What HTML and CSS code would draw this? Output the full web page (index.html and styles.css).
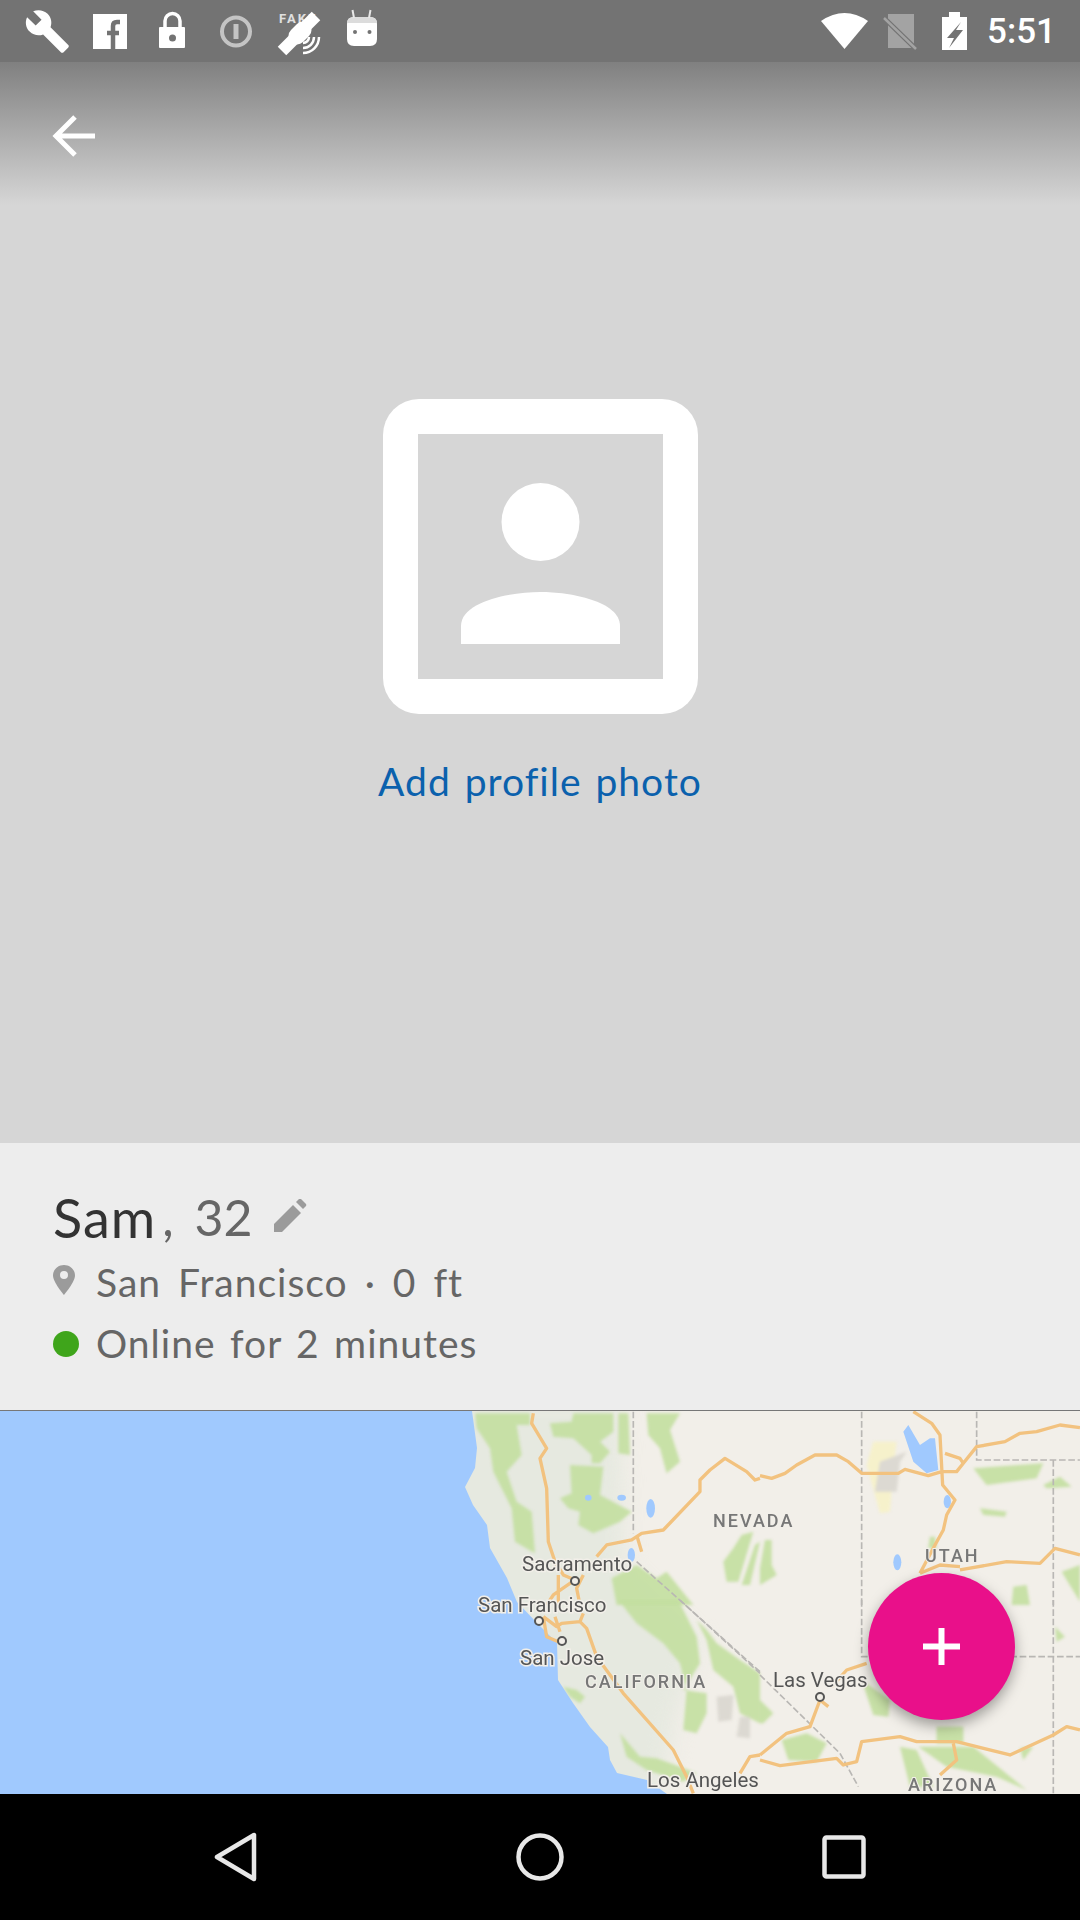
FILE: index.html
```html
<!DOCTYPE html>
<html lang="en">
<head>
    <meta charset="UTF-8">
    <meta name="viewport" content="width=device-width, initial-scale=1.0">
    <link rel="stylesheet" href="styles.css">
    <title>Profile</title>
</head>
<body>
    <div class="screen">
        <div class="statusBar">
            <svg class="statusIcons" width="400" height="62" viewBox="0 0 400 62">
                <!-- wrench -->
                <path class="white" transform="translate(24 8) scale(1.95)" d="M22.7 19l-9.1-9.1c.9-2.3.4-5-1.5-6.9-2-2-5-2.4-7.400-1.300L9 6 6 9 1.600 4.700C.4 7.100.9 10.100 2.900 12.100c1.900 1.900 4.600 2.400 6.900 1.500l9.100 9.100c.4.4 1 .4 1.400 0l2.300-2.300c.5-.4.5-1.100.1-1.400z"/>
                <!-- facebook -->
                <rect class="white" x="93" y="14" width="34" height="35"/>
                <path class="cut" d="M120 22h-3q-4 0-4 4v23M107 33h12"/>
                <!-- lock -->
                <path d="M165 28v-7a7.500 7.500 0 0 1 15 0v7" fill="none" stroke="#fff" stroke-width="3.500"/>
                <rect class="white" x="159" y="27" width="26" height="21" rx="1"/>
                <circle cx="172.500" cy="38" r="3.500" fill="#737373"/>
                <!-- info -->
                <circle cx="236" cy="31.500" r="14" fill="none" stroke="#c4c4c4" stroke-width="4"/>
                <path d="M236 24v15" stroke="#c4c4c4" stroke-width="5"/>
                <!-- fake gps -->
                <text class="fakeLabel" x="279" y="23">FAKE</text>
                <path d="M282 51l13-13" stroke="#fff" stroke-width="12"/>
                <path d="M297 36l6-6" stroke="#fff" stroke-width="17" stroke-linecap="round"/>
                <path d="M306 26l10-10" stroke="#fff" stroke-width="12"/>
                <path d="M303 43a6 6 0 0 0 6-6M303 48a11 11 0 0 0 11-11M303 53a16 16 0 0 0 16-16" fill="none" stroke="#fff" stroke-width="2.500"/>
                <!-- android -->
                <path class="white" d="M347 24q0-7 7-7h16q7 0 7 7v15q0 7-7 7h-16q-7 0-7-7z"/>
                <path d="M347 23q0-6 7-6h16q7 0 7 6z" fill="#dcdcdc"/>
                <path d="M354 18l-1.500-8M369 18l1.500-8" stroke="#e8e8e8" stroke-width="2"/>
                <circle cx="355" cy="32" r="2" fill="#737373"/>
                <circle cx="369.500" cy="32" r="2" fill="#737373"/>
            </svg>
            <div class="statusRight">
                <svg width="150" height="62" viewBox="820 0 150 62">
                    <path class="white" d="M822 21Q845.500 5 869 21L845.500 49z"/>
                    <path d="M889 14h26v34h-26z" fill="#a3a3a3"/>
                    <path d="M885 18l32 31" stroke="#737373" stroke-width="5"/>
                    <path d="M885 18l32 31" stroke="#a3a3a3" stroke-width="2.500"/>
                    <path class="white" d="M950 12h11v5h7v33h-25v-33h7z"/>
                    <path d="M962 22l-14 16h7l-5 10 14-18h-7z" fill="#737373"/>
                </svg>
                <span class="clock">5:51</span>
            </div>
        </div>

        <div class="photoArea">
            <svg class="backArrow" width="50" height="50" viewBox="0 0 50 50">
                <path d="M46 25H7M26 6L7 25l19 19" fill="none" stroke="#fff" stroke-width="5"/>
            </svg>
            <div class="photoFrame">
                <svg width="245" height="245" viewBox="418 434 245 245">
                    <circle cx="540.500" cy="522" r="39" fill="#fff"/>
                    <path d="M461 644v-18c0-25 50-34 79.500-34s79.500 9 79.500 34v18z" fill="#fff"/>
                </svg>
            </div>
            <div class="addPhoto">Add profile photo</div>
        </div>

        <div class="info">
            <div class="nameRow">
                <span class="name">Sam</span>
                <span class="comma">,</span>
                <span class="age">32</span>
                <svg class="pencil" width="34" height="34" viewBox="0 0 34 34">
                    <path d="M1 25L20 6l8 8L9 33H1z" fill="#9b9b9b"/>
                    <path d="M23 3l3-3q1-.5 2 0l5 5q.5 1 0 2l-3 3z" fill="#9b9b9b"/>
                </svg>
            </div>
            <div class="infoRow cityRow">
                <svg class="infoIcon" width="22" height="30" viewBox="0 0 22 30">
                    <path fill-rule="evenodd" d="M11 0C5 0 0 4.500 0 10.500 0 17 11 30 11 30s11-13 11-19.500C22 4.500 17 0 11 0zm0 14a4 4 0 1 1 0-8 4 4 0 0 1 0 8z" fill="#9b9b9b"/>
                </svg>
                <span>San Francisco · 0 ft</span>
            </div>
            <div class="infoRow">
                <span class="onlineDot"></span>
                <span>Online for 2 minutes</span>
            </div>
        </div>

        <div class="mapArea">
            <svg class="map" width="1080" height="383" viewBox="0 1411 1080 383">
                <rect class="land" x="0" y="1411" width="1080" height="383"/>
                <path class="valley" d="M400 1400H620L625 1565 700 1640 675 1720 660 1800H400z"/>

                <g class="terrain">
                    <!-- north west part -->
                    <g transform="translate(440 1405) scale(.3333)">
                        <path class="green" d="M105 25H270V60H230L245 150 200 200 230 290 275 320 285 445 225 410 215 310 160 200 150 130 110 70z"/>
                        <path class="green" d="M330 55L395 50 400 25H520V80L480 110 510 140 480 175H455V150L400 100 340 95z"/>
                        <path class="green" d="M390 180L490 185 480 270 575 320 540 350 460 385 415 360 420 320 385 310 360 280 395 265z"/>
                        <path class="green" d="M535 25H565L570 150 535 145z"/>
                        <path class="green" d="M620 25H720L690 75 720 170 680 205 660 130 625 90z"/>
                        <path class="green" d="M515 520L590 480 650 520 680 500 760 600H530z"/>
                        <path class="green" d="M905 390L940 380 895 530 860 530 850 470 880 430z"/>
                        <path class="green" d="M960 410L930 540 905 540 945 420z"/>
                    </g>
                    <!-- south west part -->
                    <g transform="translate(440 1600) scale(.3333)">
                        <path class="green" d="M535 0H715L770 110 780 190 730 270 800 280V340L770 400 730 390 740 270 720 190 670 130 590 70z"/>
                        <path class="green" d="M770 60L800 90 830 130 900 180 960 220V370L900 340 880 260 820 210 800 120z"/>
                        <path class="green" d="M370 260L410 270 435 290 420 310 390 290z"/>
                        <path class="green" d="M540 400L600 470 650 475 720 500 770 520 730 545 620 510 560 470z"/>
                        <path class="grey" d="M830 290L880 285 875 360 835 365z"/>
                        <path class="grey" d="M900 350H930V415L890 410z"/>
                    </g>
                    <!-- north east part -->
                    <g transform="translate(760 1405) scale(.3333)">
                        <path class="yellow" d="M340 110H410L400 190 390 320 360 325 320 180z"/>
                        <path class="grey" d="M360 170L440 140 420 170 410 260H345z"/>
                        <path class="green" d="M640 190L850 175 830 220 680 240z"/>
                        <path class="green" d="M660 310L740 320 735 335 670 330z"/>
                        <path class="green" d="M850 240L900 215 935 245 860 250z"/>
                        <path class="green" d="M760 545L800 540 810 600H755z"/>
                        <path class="green" d="M905 500L960 480V590z"/>
                        <path class="green" d="M15 405H35V480L50 510 0 540V490z"/>
                        <path class="green" d="M510 395L525 395 530 430 505 430z"/>
                    </g>
                    <!-- south east part -->
                    <g transform="translate(760 1600) scale(.3333)">
                        <path class="green" d="M420 440L470 450 520 560H450z"/>
                        <path class="green" d="M475 440H640L800 570 710 530 560 500z"/>
                        <path class="green" d="M530 380H610V430H530z"/>
                        <path class="green" d="M65 420L140 400 200 430 170 485 85 480z"/>
                        <path class="green" d="M0 300L40 340 10 370H0z"/>
                        <path class="green" d="M305 240L390 300 385 350 340 345z"/>
                        <path class="green" d="M780 445L820 440 790 480z"/>
                        <path class="green" d="M885 80L915 110 890 125z"/>
                    </g>
                </g>

                <path class="sea" d="M0 1411H472L477 1448 475 1468 465 1487 473 1505 487 1525 490 1548 507 1578 517 1602 537 1623 557 1643 558 1680 573 1703 590 1727 608 1747 610 1760 617 1773 647 1780 667 1794H0z"/>

                <!-- lakes, borders and roads -->
                <g transform="translate(440 1405) scale(.3333)">
                    <ellipse class="lake" cx="632" cy="310" rx="13" ry="28"/>
                    <ellipse class="lake" cx="545" cy="278" rx="13" ry="9"/>
                    <ellipse class="lake" cx="445" cy="278" rx="10" ry="9"/>
                    <ellipse class="lake" cx="574" cy="450" rx="11" ry="21"/>
                    <path class="border" d="M580 20V385M590 470L960 800"/>
                    <path class="road" d="M280 25L275 55 320 130 300 160 320 250 325 410 345 470 370 510 405 525M470 455L500 420 575 405 605 385 670 375 780 260V225L810 195 855 160 920 200 945 225 960 220M405 525L340 570 320 600M355 510V600M430 510L410 550 420 600M590 390L605 440"/>
                </g>
                <g transform="translate(440 1600) scale(.3333)">
                    <path class="road" d="M310 50L350 80 365 70 420 65 440 85 470 170 550 280 700 450 740 530 760 580M310 50L320 110 355 125M345 50L360 95M430 40L420 65M900 520L930 470 960 465"/>
                    <path class="border" d="M720 0L960 220"/>
                </g>
                <g transform="translate(760 1405) scale(.3333)">
                    <path class="lake" d="M430 80L445 60 480 120 510 100 525 100 535 195 500 205 460 170z"/>
                    <ellipse class="lake" cx="562" cy="290" rx="11" ry="20"/>
                    <ellipse class="lake" cx="412" cy="472" rx="12" ry="24"/>
                    <path class="border" d="M305 20V600M650 20V165H960M880 165V600"/>
                    <path class="road" d="M0 212L35 220 75 205 110 180 165 150H230L265 170 305 205H415L435 193 505 212 545 200H590L610 175 600 160 555 145M460 20L515 55 540 90 548 240 585 285 560 330 550 375 525 420 480 505M610 175L650 125 735 110 780 85 830 80 900 60 960 68M600 495L740 470 840 475 885 430 960 450M480 505L540 480 600 485"/>
                </g>
                <g transform="translate(760 1600) scale(.3333)">
                    <path class="border" d="M305 0V170H960M880 0V580M0 225L240 460 295 560"/>
                    <path class="road" d="M320 190L260 210 215 260M205 320L180 300 150 380 80 400 0 465M0 480L60 497 230 475 250 495 290 485 305 425 420 410 470 425H590L750 465 880 405 920 380 960 390M580 430L590 480 540 525"/>
                </g>

                <circle class="city" cx="575" cy="1581" r="4"/>
                <circle class="city" cx="539" cy="1621" r="4"/>
                <circle class="city" cx="562" cy="1641" r="4"/>
                <circle class="city" cx="820" cy="1697" r="4"/>
                <text class="cityName" x="522" y="1571">Sacramento</text>
                <text class="cityName" x="478" y="1612">San Francisco</text>
                <text class="cityName" x="520" y="1665">San Jose</text>
                <text class="cityName" x="773" y="1687">Las Vegas</text>
                <text class="cityName" x="647" y="1787">Los Angeles</text>
                <text class="stateName" x="585" y="1688">CALIFORNIA</text>
                <text class="stateName" x="713" y="1527">NEVADA</text>
                <text class="stateName" x="925" y="1562">UTAH</text>
                <text class="stateName" x="908" y="1791">ARIZONA</text>
            </svg>
            <button class="fab">
                <svg width="37" height="37" viewBox="0 0 37 37">
                    <path d="M18.500 0v37M0 18.500h37" stroke="#fff" stroke-width="6"/>
                </svg>
            </button>
        </div>

        <div class="navBar">
            <div class="navItem">
                <svg width="46" height="52" viewBox="0 0 46 52">
                    <path d="M41 4v44L4 26z" fill="none" stroke="#e8e8e8" stroke-width="4.500" stroke-linejoin="round"/>
                </svg>
            </div>
            <div class="navItem">
                <svg width="50" height="50" viewBox="0 0 50 50">
                    <circle cx="25" cy="25" r="21.500" fill="none" stroke="#e8e8e8" stroke-width="4.500"/>
                </svg>
            </div>
            <div class="navItem">
                <svg width="44" height="44" viewBox="0 0 44 44">
                    <rect x="2.500" y="2.500" width="39" height="39" rx="2" fill="none" stroke="#e8e8e8" stroke-width="4.500"/>
                </svg>
            </div>
        </div>
    </div>
</body>
</html>
```

FILE: styles.css
```css
:root {
    --status-color: #737373;
    --photo-color: #d6d6d6;
    --info-color: #ededed;
    --text-dark: #333;
    --text-grey: #666;
    --link-color: #0b61ad;
    --accent-color: #e9108a;
}

body {
    margin: 0;
    font-family: 'Lato', sans-serif;
    background-color: #000;
}

.screen {
    width: 1080px;
    height: 1920px;
    display: flex;
    flex-direction: column;
    overflow: hidden;
}

.statusBar {
    height: 62px;
    flex: none;
    display: flex;
    justify-content: space-between;
    background-color: var(--status-color);
}

.statusRight {
    display: flex;
    align-items: center;
    padding-right: 24px;
    gap: 18px;
}

.clock {
    font-family: 'Roboto', sans-serif;
    font-weight: 500;
    font-size: 35px;
    color: #fff;
}

.white {
    fill: #fff;
}

.cut {
    fill: none;
    stroke: var(--status-color);
    stroke-width: 4.500;
}

.fakeLabel {
    font-family: 'Roboto', sans-serif;
    font-weight: 700;
    font-size: 13px;
    letter-spacing: 2px;
    fill: #e0e0e0;
}

.photoArea {
    height: 1081px;
    flex: none;
    position: relative;
    display: flex;
    flex-direction: column;
    align-items: center;
    padding-top: 337px;
    box-sizing: border-box;
    background: linear-gradient(#808080 0, var(--photo-color) 143px);
}

.backArrow {
    position: absolute;
    left: 49px;
    top: 49px;
}

.photoFrame {
    width: 315px;
    height: 315px;
    box-sizing: border-box;
    padding: 35px;
    border-radius: 36px;
    background-color: #fff;
}

.photoFrame svg {
    display: block;
    background-color: var(--photo-color);
}

.addPhoto {
    margin-top: 44px;
    font-size: 39px;
    line-height: 47px;
    letter-spacing: 1px;
    word-spacing: 3px;
    color: var(--link-color);
}

.info {
    height: 268px;
    flex: none;
    box-sizing: border-box;
    padding: 44px 53px 0;
    border-bottom: 1px solid #777;
    background-color: var(--info-color);
    color: var(--text-grey);
}

.nameRow {
    display: flex;
    align-items: center;
    height: 60px;
    font-size: 50px;
}

.name {
    font-size: 54px;
    letter-spacing: 1px;
    color: var(--text-dark);
}

.comma {
    margin-left: 6px;
}

.age {
    margin-left: 21px;
}

.pencil {
    margin-left: 20px;
    margin-top: -3px;
}

.infoRow {
    display: flex;
    align-items: center;
    height: 61px;
    font-size: 39px;
    letter-spacing: 1px;
    word-spacing: 3.500px;
}

.cityRow {
    margin-top: 4px;
    word-spacing: 6px;
}

.infoIcon {
    flex: none;
    margin-right: 21px;
    margin-top: -4px;
}

.onlineDot {
    width: 26px;
    height: 26px;
    flex: none;
    margin-right: 17px;
    margin-top: 2px;
    border-radius: 50%;
    background-color: #3fa51b;
}

.mapArea {
    height: 383px;
    flex: none;
    position: relative;
}

.map {
    display: block;
    filter: blur(.6px);
}

.terrain {
    filter: blur(1.500px);
}

.land {
    fill: #f2efe9;
}

.valley {
    fill: #e6e9e0;
    filter: blur(10px);
}

.sea,
.lake {
    fill: #a0c9fe;
}

.green {
    fill: #c3dfa0;
    fill-opacity: .9;
}

.grey {
    fill: #dcd9d2;
}

.yellow {
    fill: #f6f1cb;
}

.road {
    fill: none;
    stroke: #f2c27f;
    stroke-width: 10;
    stroke-linejoin: round;
}

.border {
    fill: none;
    stroke: #b9b7b4;
    stroke-width: 5;
    stroke-dasharray: 20 8;
}

.city {
    fill: #f2efe9;
    stroke: #555;
    stroke-width: 2;
}

.cityName {
    font-family: 'Roboto', sans-serif;
    font-size: 20.500px;
    fill: #555;
    stroke: #f2efe9;
    stroke-width: 3px;
    paint-order: stroke;
}

.stateName {
    font-family: 'Roboto', sans-serif;
    font-weight: 500;
    font-size: 18px;
    letter-spacing: 2px;
    fill: #777;
    stroke: #f2efe9;
    stroke-width: 2px;
    paint-order: stroke;
}

.fab {
    position: absolute;
    left: 868px;
    top: 162px;
    width: 147px;
    height: 147px;
    padding: 0;
    border: none;
    border-radius: 50%;
    display: flex;
    align-items: center;
    justify-content: center;
    background-color: var(--accent-color);
    box-shadow: 0 6px 14px rgba(0, 0, 0, 0.35);
}

.navBar {
    flex: 1;
    display: flex;
    justify-content: center;
    align-items: center;
    background-color: #000;
}

.navItem {
    width: 304px;
    display: flex;
    justify-content: center;
    align-items: center;
}
```
